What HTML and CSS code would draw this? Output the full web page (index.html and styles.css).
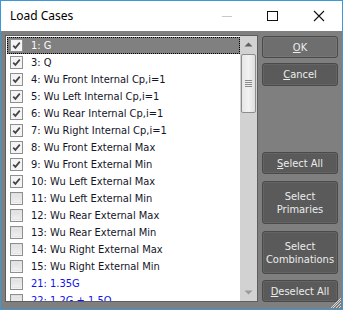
FILE: index.html
```html
<!DOCTYPE html>
<html lang="en">
<head>
  <meta charset="UTF-8" />
  <title>Load Cases</title>
  <link rel="stylesheet" href="styles.css">
</head>
<body>
  <div class="window">
    <div class="titlebar">
      <span class="title">Load Cases</span>
      <div class="controls">
        <svg class="ctl" width="46" height="30" viewBox="0 0 46 30"><line x1="18" y1="15.5" x2="28" y2="15.5" stroke="#c8c8c8" stroke-width="1"/></svg>
        <svg class="ctl" width="46" height="30" viewBox="0 0 46 30"><rect x="17.5" y="10.5" width="10" height="9" fill="none" stroke="#111" stroke-width="1"/></svg>
        <svg class="ctl" width="46" height="30" viewBox="0 0 46 30"><path d="M18 10 L28 20 M28 10 L18 20" stroke="#111" stroke-width="1.1"/></svg>
      </div>
    </div>

    <div class="content">
      <div class="listbox">
        <ul class="items">
          <li class="item selected"><span class="check on"></span>1: G</li>
          <li class="item"><span class="check on"></span>3: Q</li>
          <li class="item"><span class="check on"></span>4: Wu Front Internal Cp,i=1</li>
          <li class="item"><span class="check on"></span>5: Wu Left Internal Cp,i=1</li>
          <li class="item"><span class="check on"></span>6: Wu Rear Internal Cp,i=1</li>
          <li class="item"><span class="check on"></span>7: Wu Right Internal Cp,i=1</li>
          <li class="item"><span class="check on"></span>8: Wu Front External Max</li>
          <li class="item"><span class="check on"></span>9: Wu Front External Min</li>
          <li class="item"><span class="check on"></span>10: Wu Left External Max</li>
          <li class="item"><span class="check"></span>11: Wu Left External Min</li>
          <li class="item"><span class="check"></span>12: Wu Rear External Max</li>
          <li class="item"><span class="check"></span>13: Wu Rear External Min</li>
          <li class="item"><span class="check"></span>14: Wu Right External Max</li>
          <li class="item"><span class="check"></span>15: Wu Right External Min</li>
          <li class="item combo"><span class="check"></span>21: 1.35G</li>
          <li class="item combo"><span class="check"></span>22: 1.2G + 1.5Q</li>
        </ul>
        <div class="scrollbar">
          <svg class="arrow" width="17" height="17" viewBox="0 0 17 17"><path d="M4.5 10.5 L8.5 6.5 L12.5 10.5 Z" fill="#606060"/></svg>
          <div class="track">
            <div class="thumb">
              <svg width="7" height="7" viewBox="0 0 7 7"><path d="M0 0.5 H7 M0 2.5 H7 M0 4.5 H7 M0 6.5 H7" stroke="#8a8a8a" stroke-width="1"/></svg>
            </div>
          </div>
          <svg class="arrow" width="17" height="17" viewBox="0 0 17 17"><path d="M4.5 6.5 L8.5 10.5 L12.5 6.5 Z" fill="#9a9a9a"/></svg>
        </div>
      </div>

      <div class="actions">
        <button class="btn btn-default"><u>O</u>K</button>
        <button class="btn btn-cancel"><u>C</u>ancel</button>
        <div class="spacer"></div>
        <button class="btn"><u>S</u>elect All</button>
        <button class="btn tall">Select<br>Primaries</button>
        <button class="btn tall">Select<br>Combinations</button>
        <button class="btn"><u>D</u>eselect All</button>
      </div>
    </div>

    <svg class="grip" width="12" height="12" viewBox="0 0 12 12"><path d="M11 3 L3 11 M11 6 L6 11 M11 9 L9 11 M11 1 L1 11" stroke="#d8d8d8" stroke-width="1"/></svg>
  </div>
</body>
</html>
```

FILE: styles.css
```css
* {
  margin: 0;
  padding: 0;
  box-sizing: border-box;
}

body {
  width: 343px;
  height: 310px;
  overflow: hidden;
  font-family: 'DejaVu Sans Condensed', 'DejaVu Sans', sans-serif;
  font-size: 11px;
}

.window {
  position: relative;
  width: 343px;
  height: 310px;
  border: 1px solid #3c98d6;
  background: #7f7f7f;
  display: flex;
  flex-direction: column;
}

.titlebar {
  height: 30px;
  flex: none;
  background: #fff;
  display: flex;
  align-items: center;
  justify-content: space-between;
}

.title {
  font-family: 'Noto Sans', 'Open Sans', sans-serif;
  font-size: 12px;
  color: #000;
  padding-left: 9px;
  padding-bottom: 1px;
}

.controls {
  display: flex;
}

.ctl {
  display: block;
}

.content {
  flex: 1;
  min-height: 0;
  display: flex;
  padding: 4px 4px 7px 4px;
  gap: 4px;
}

/* List */
.listbox {
  width: 253px;
  min-height: 0;
  border: 1px solid #5e5e5e;
  background: #fff;
  display: flex;
  overflow: hidden;
}

.items {
  list-style: none;
  flex: 1;
  padding-top: 1px;
}

.item {
  height: 17px;
  display: flex;
  align-items: center;
  padding-left: 4px;
  color: #141428;
  white-space: nowrap;
}

.item.selected {
  background: #808080;
  color: #fafafa;
  outline: 1px dotted #000;
  outline-offset: -1px;
  margin: 0 0 0 1px;
  padding-left: 3px;
}

.item.combo {
  color: #1010f0;
}

.check {
  width: 13px;
  height: 13px;
  border: 1px solid #8f8f8f;
  background: linear-gradient(#dcdcdc, #f4f4f4);
  margin-right: 8px;
  flex: none;
  position: relative;
}

.check::before {
  content: "";
  position: absolute;
  inset: 1px;
  border: 1px solid #e6e6e6;
}

.check.on {
  background: #f4f4f4 url("data:image/svg+xml,%3Csvg xmlns='http://www.w3.org/2000/svg' width='11' height='11'%3E%3Cpath d='M2.2 5.6 L4.4 7.9 L8.8 2.6' fill='none' stroke='%23454545' stroke-width='1.7'/%3E%3C/svg%3E") center / 11px 11px no-repeat;
}

.check.on::before {
  display: none;
}

/* Scrollbar */
.scrollbar {
  width: 17px;
  flex: none;
  background: #d2d2d2;
  display: flex;
  flex-direction: column;
}

.arrow {
  display: block;
  flex: none;
}

.track {
  flex: 1;
  padding-top: 1px;
}

.thumb {
  margin: 0 1px;
  height: 59px;
  border: 1px solid #8c8c8c;
  border-radius: 2px;
  background: linear-gradient(90deg, #e6e6e6, #f2f2f2 50%, #dedede);
  display: flex;
  align-items: center;
  justify-content: center;
}

.thumb svg {
  display: block;
}

/* Buttons */
.actions {
  width: 76px;
  display: flex;
  flex-direction: column;
  gap: 6px;
  padding-top: 1px;
}

.spacer {
  flex: 1;
}

.btn {
  height: 22px;
  flex: none;
  background: #5a5a5a;
  border: 1px solid #4a4a4a;
  border-radius: 3px;
  color: #ececec;
  font-family: 'DejaVu Sans Condensed', 'DejaVu Sans', sans-serif;
  font-size: 11px;
  line-height: 13px;
  box-shadow: inset 0 0 0 1px #646464;
}

.btn u {
  text-decoration-thickness: 1px;
}

.btn.tall {
  height: 43px;
  margin-top: 1px;
}

.btn-default {
  background: #6e6e6e;
  box-shadow: inset 0 0 0 1px #767676;
}

.btn-cancel {
  height: 23px;
  margin-top: -1px;
}

.grip {
  position: absolute;
  right: 0;
  bottom: 0;
}
```
